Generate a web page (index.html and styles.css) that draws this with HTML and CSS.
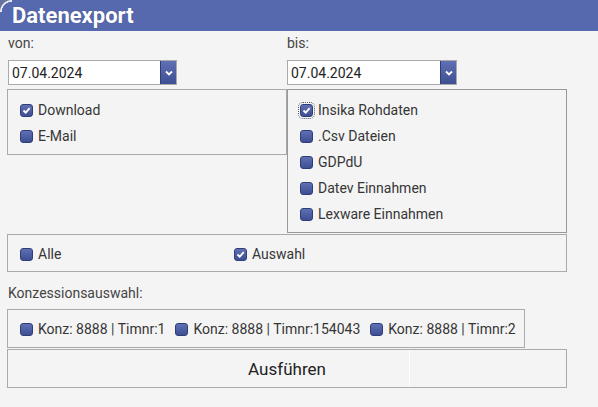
FILE: index.html
```html
<!DOCTYPE html>
<html lang="de">
  <head>
    <meta charset="utf-8" />
    <title>Datenexport</title>
    <link rel="stylesheet" href="styles.css">
  </head>
  <body>
    <header class="panel-header">Datenexport</header>

    <div class="export-form">
      <!-- Zeitraum -->
      <div class="date-row">
        <div class="date-field first">
          <div class="field-label">von:</div>
          <div class="select">
            <span class="select-value">07.04.2024</span>
            <span class="select-arrow">
              <svg width="10" height="8" viewBox="0 0 10 8"><path d="M2 2.5l3 3 3-3" fill="none" stroke="#fff" stroke-width="1.8"/></svg>
            </span>
          </div>
        </div>
        <div class="date-field">
          <div class="field-label">bis:</div>
          <div class="select">
            <span class="select-value">07.04.2024</span>
            <span class="select-arrow">
              <svg width="10" height="8" viewBox="0 0 10 8"><path d="M2 2.5l3 3 3-3" fill="none" stroke="#fff" stroke-width="1.8"/></svg>
            </span>
          </div>
        </div>
      </div>

      <!-- Ziel und Formate -->
      <div class="option-row">
        <div class="box box-target">
          <label class="check"><span class="cb checked"><svg width="11" height="11" viewBox="0 0 11 11"><path d="M2.5 5.5l2.2 2.2 4-4.5" fill="none" stroke="#fff" stroke-width="1.8"/></svg></span>Download</label>
          <label class="check"><span class="cb"></span>E-Mail</label>
        </div>
        <div class="box box-formats">
          <label class="check"><span class="cb checked focus"><svg width="11" height="11" viewBox="0 0 11 11"><path d="M2.5 5.5l2.2 2.2 4-4.5" fill="none" stroke="#fff" stroke-width="1.8"/></svg></span>Insika Rohdaten</label>
          <label class="check"><span class="cb"></span>.Csv Dateien</label>
          <label class="check"><span class="cb"></span>GDPdU</label>
          <label class="check"><span class="cb"></span>Datev Einnahmen</label>
          <label class="check"><span class="cb"></span>Lexware Einnahmen</label>
        </div>
      </div>

      <div class="box box-scope">
        <label class="check"><span class="cb"></span>Alle</label>
        <label class="check"><span class="cb checked"><svg width="11" height="11" viewBox="0 0 11 11"><path d="M2.5 5.5l2.2 2.2 4-4.5" fill="none" stroke="#fff" stroke-width="1.8"/></svg></span>Auswahl</label>
      </div>

      <div class="section-label">Konzessionsauswahl:</div>
      <div class="box box-konz">
        <label class="check"><span class="cb"></span>Konz: 8888 | Timnr:1</label>
        <label class="check"><span class="cb"></span>Konz: 8888 | Timnr:154043</label>
        <label class="check"><span class="cb"></span>Konz: 8888 | Timnr:2</label>
      </div>

      <button class="run-button" type="button">Ausführen</button>
    </div>
  </body>
</html>
```

FILE: styles.css
```css
body {
  margin: 0;
  background: #f4f4f4;
  font-family: Roboto, "Liberation Sans", Arial, sans-serif;
  font-size: 14px;
  color: #363636;
}

/* Header */
.panel-header {
  position: relative;
  height: 31px;
  padding-left: 12px;
  background: #5668ae;
  color: #fff;
  font-size: 22px;
  font-weight: 700;
  line-height: 31px;
  text-shadow: 0 0 1px rgba(0, 0, 0, 0.3);
}

.panel-header::before {
  content: "";
  position: absolute;
  top: 0;
  left: 0;
  width: 12px;
  height: 12px;
  background: radial-gradient(circle at 12px 12px, transparent 10px, #e9ebf3 10.5px, #e9ebf3 11.5px, #66739f 12.5px);
}

.export-form {
  width: 560px;
  padding-left: 7px;
}

/* Date selects */
.date-row {
  display: grid;
  grid-template-columns: 280px 280px;
  padding-top: 4px;
}

.date-field.first {
  padding-left: 1px;
}

.field-label {
  height: 17px;
  line-height: 17px;
  color: #444;
  margin-bottom: 8px;
}

.select {
  display: flex;
  align-items: center;
  justify-content: space-between;
  width: 167px;
  height: 23px;
  background: #fff;
  border: 1px solid #aaa;
  color: #222;
}

.date-field:last-child .select {
  width: 168px;
}

.select-value {
  padding-left: 3px;
}

.select-arrow {
  display: flex;
  align-items: center;
  justify-content: center;
  width: 15px;
  height: 23px;
  background: linear-gradient(#5f70b4, #3f4f94);
  border-left: 1px solid #2f3d78;
}

/* Boxes */
.option-row {
  display: grid;
  grid-template-columns: 280px 280px;
  align-items: start;
  margin-top: 4px;
}

.box {
  border: 1px solid #aaa;
  box-sizing: border-box;
}

.box-target,
.box-formats {
  padding: 7px 12px 5px;
}

.box-formats {
  border-color: #999;
}

.check {
  display: flex;
  align-items: center;
  gap: 5px;
  height: 26px;
}

.cb {
  display: inline-flex;
  align-items: center;
  justify-content: center;
  flex: none;
  width: 11px;
  height: 11px;
  border: 1px solid #2f3d78;
  border-radius: 3px;
  background: linear-gradient(#6070b5, #3e4e93);
}

.cb.focus {
  outline: 1px dotted #556;
  outline-offset: 1px;
}

.box-scope {
  display: grid;
  grid-template-columns: 214px auto;
  align-items: center;
  height: 38px;
  margin-top: 1px;
  padding: 2px 12px 0;
}

.section-label {
  height: 17px;
  line-height: 17px;
  margin-top: 13px;
  color: #444;
  padding-left: 1px;
}

.box-konz {
  display: flex;
  align-items: center;
  gap: 10px;
  width: fit-content;
  height: 39px;
  margin-top: 7px;
  padding: 1px 8px 0 12px;
}

.box-konz .check {
  height: auto;
}

.run-button {
  display: block;
  width: 560px;
  height: 39px;
  margin-top: 1px;
  border: 1px solid #aaa;
  background: linear-gradient(to right, #f4f4f4 401px, #fff 401px, #fff 402px, #f4f4f4 402px);
  font-family: Roboto, "Liberation Sans", Arial, sans-serif;
  font-size: 17px;
  color: #222;
  padding: 0;
}
```
